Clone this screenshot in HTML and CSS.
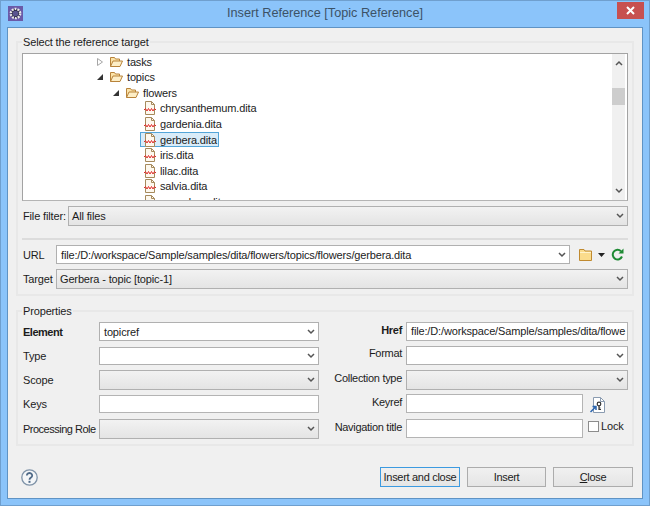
FILE: index.html
```html
<!DOCTYPE html>
<html lang="en">
<head>
	<meta charset="UTF-8">
	<title>Insert Reference [Topic Reference]</title>
	<link rel="stylesheet" href="styles.css">
</head>
<body>
	<svg class="defs" width="0" height="0">
		<symbol id="folder-open" viewBox="0 0 14 12">
			<path d="M1.500 10.500V1.500h4l1 1.500h4v2" fill="#fbe3a8" stroke="#b8833a"/>
			<path d="M1.500 10.500l2.500-5.500h9.500l-2.500 5.500z" fill="#fdeec6" stroke="#b8833a"/>
		</symbol>
		<symbol id="dita" viewBox="0 0 12 14">
			<path d="M1.500 .5h6l3 3v10h-9z" fill="#fdf8ee" stroke="#a68a5c"/>
			<path d="M7.500 .5v3h3" fill="none" stroke="#a68a5c"/>
			<path d="M0 9l1.500-1.500 1.500 2.500 1.500-2.500 1.500 2.500 1.500-2.500 1.500 2.500 1.500-2.500 1.500 1.500" fill="none" stroke="#e02b2b"/>
		</symbol>
		<symbol id="chevron" viewBox="0 0 8 6">
			<path d="M1 1l3 3 3-3" fill="none" stroke="#555" stroke-width="1.500"/>
		</symbol>
	</svg>

	<div class="window">
		<div class="titlebar">
			<svg class="app_icon" width="15" height="15" viewBox="0 0 16 16">
				<rect width="16" height="16" fill="#6a5aa8"/>
				<circle cx="8" cy="8" r="5" fill="#2c2a44" stroke="#e8e8e8" stroke-width="2.500" stroke-dasharray="2 1.140"/>
				<circle cx="8" cy="8" r="3" fill="#5a5590"/>
			</svg>
			<div class="title">Insert Reference [Topic Reference]</div>
			<div class="close_x">
				<svg width="9" height="9" viewBox="0 0 9 9"><path d="M1 1l7 7M8 1l-7 7" stroke="#fff" stroke-width="2"/></svg>
			</div>
		</div>

		<div class="content">
			<fieldset class="group">
				<legend>Select the reference target</legend>

				<div class="tree">
					<div class="tree_rows">
						<div class="row level2">
							<svg class="arrow" width="6" height="8" viewBox="0 0 6 8"><path d="M.5 .5l5 3.500-5 3.500z" fill="#fff" stroke="#a6a6a6"/></svg>
							<svg class="folder" width="14" height="12"><use href="#folder-open"/></svg>
							<span>tasks</span>
						</div>
						<div class="row level2">
							<svg class="arrow" width="6" height="6" viewBox="0 0 6 6"><path d="M6 0v6h-6z" fill="#333"/></svg>
							<svg class="folder" width="14" height="12"><use href="#folder-open"/></svg>
							<span>topics</span>
						</div>
						<div class="row level3">
							<svg class="arrow" width="6" height="6" viewBox="0 0 6 6"><path d="M6 0v6h-6z" fill="#333"/></svg>
							<svg class="folder" width="14" height="12"><use href="#folder-open"/></svg>
							<span>flowers</span>
						</div>
						<div class="row level4"><div class="file"><svg width="12" height="14"><use href="#dita"/></svg><span>chrysanthemum.dita</span></div></div>
						<div class="row level4"><div class="file"><svg width="12" height="14"><use href="#dita"/></svg><span>gardenia.dita</span></div></div>
						<div class="row level4"><div class="file selected"><svg width="12" height="14"><use href="#dita"/></svg><span>gerbera.dita</span></div></div>
						<div class="row level4"><div class="file"><svg width="12" height="14"><use href="#dita"/></svg><span>iris.dita</span></div></div>
						<div class="row level4"><div class="file"><svg width="12" height="14"><use href="#dita"/></svg><span>lilac.dita</span></div></div>
						<div class="row level4"><div class="file"><svg width="12" height="14"><use href="#dita"/></svg><span>salvia.dita</span></div></div>
						<div class="row level4"><div class="file"><svg width="12" height="14"><use href="#dita"/></svg><span>snowdrop.dita</span></div></div>
					</div>
					<div class="scrollbar">
						<svg class="scroll_btn" width="8" height="6" viewBox="0 0 8 6"><path d="M1 5l3-3 3 3" fill="none" stroke="#555" stroke-width="1.500"/></svg>
						<div class="scroll_track"><div class="scroll_thumb"></div></div>
						<svg class="scroll_btn" width="8" height="6"><use href="#chevron"/></svg>
					</div>
				</div>

				<div class="line filter_line">
					<label class="filter_label">File filter:</label>
					<div class="combo grey grow">All files<svg width="8" height="6"><use href="#chevron"/></svg></div>
				</div>

				<div class="separator"></div>

				<div class="line url_line">
					<label class="url_label">URL</label>
					<div class="combo white grow">file:/D:/workspace/Sample/samples/dita/flowers/topics/flowers/gerbera.dita<svg width="8" height="6"><use href="#chevron"/></svg></div>
					<div class="url_tools">
						<svg width="13" height="12" viewBox="0 0 13 12">
							<path d="M.5 11.500V.5h4.500l1 1.500h6.500v9.500z" fill="#fbdc8c" stroke="#c08a30"/>
							<path d="M1 3.500h11" stroke="#fff3cc"/>
						</svg>
						<svg class="drop" width="7" height="4" viewBox="0 0 7 4"><path d="M0 0h7l-3.500 4z" fill="#222"/></svg>
						<svg class="refresh" width="13" height="13" viewBox="0 0 13 13">
							<path d="M11 8.500a4.800 4.800 0 1 1-1-5.200" fill="none" stroke="#1e8a34" stroke-width="2"/>
							<path d="M12.500 .5v5h-5z" fill="#1e8a34"/>
						</svg>
					</div>
				</div>

				<div class="line target_line">
					<label class="url_label">Target</label>
					<div class="combo grey grow">Gerbera - topic [topic-1]<svg width="8" height="6"><use href="#chevron"/></svg></div>
				</div>
			</fieldset>

			<fieldset class="group props">
				<legend>Properties</legend>

				<div class="props_grid">
					<label class="tight"><b>Element</b></label>
					<div class="combo white">topicref<svg width="8" height="6"><use href="#chevron"/></svg></div>
					<label class="right"><b>Href</b></label>
					<div class="field">file:/D:/workspace/Sample/samples/dita/flowe</div>

					<label>Type</label>
					<div class="combo white low"><svg width="8" height="6"><use href="#chevron"/></svg></div>
					<label class="right up">Format</label>
					<div class="combo white"><svg width="8" height="6"><use href="#chevron"/></svg></div>

					<label>Scope</label>
					<div class="combo grey"><svg width="8" height="6"><use href="#chevron"/></svg></div>
					<label class="right">Collection type</label>
					<div class="combo grey"><svg width="8" height="6"><use href="#chevron"/></svg></div>

					<label>Keys</label>
					<div class="field low"></div>
					<label class="right">Keyref</label>
					<div class="cell">
						<div class="field grow"></div>
						<svg class="key_icon" width="15" height="16" viewBox="0 0 15 16">
							<path d="M3.500 .5h7l4 4v11h-11z" fill="#fff" stroke="#8a9bb0"/>
							<path d="M10.500 .5v4h4" fill="none" stroke="#8a9bb0"/>
							<circle cx="9" cy="7" r="1.800" fill="none" stroke="#333" stroke-width="1.200"/>
							<path d="M9 9v3.500h2M9 11h1.500" fill="none" stroke="#333" stroke-width="1.200"/>
							<path d="M.5 15l5-5M2.500 9.500h3.500v3.500" fill="none" stroke="#2b66b0" stroke-width="1.500"/>
						</svg>
					</div>

					<label class="tight">Processing Role</label>
					<div class="combo grey"><svg width="8" height="6"><use href="#chevron"/></svg></div>
					<label class="right">Navigation title</label>
					<div class="cell">
						<div class="field grow"></div>
						<div class="check"></div>
						<span>Lock</span>
					</div>
				</div>
			</fieldset>

			<div class="footer">
				<svg width="17" height="17" viewBox="0 0 17 17">
					<circle cx="8.500" cy="8.500" r="7.700" fill="#f4f6f8" stroke="#7f93a8" stroke-width="1.300"/>
					<path d="M5.800 6.500a2.700 2.500 0 1 1 4.200 2.100c-1 .7-1.500 1.100-1.500 2.100" fill="none" stroke="#4f6a88" stroke-width="1.800"/>
					<rect x="7.500" y="11.800" width="2" height="2" fill="#4f6a88"/>
				</svg>
				<div class="buttons">
					<button class="btn default">Insert and close</button>
					<button class="btn narrow">Insert</button>
					<button class="btn"><u>C</u>lose</button>
				</div>
			</div>
		</div>
	</div>
</body>
</html>
```

FILE: styles.css
```css
*{
	box-sizing:border-box;
	margin:0;
	padding:0;
}

body{
	font-family:"Liberation Sans",Arial,sans-serif;
	font-size:11px;
	letter-spacing:-0.15px;
	color:#1c1c1c;
	background-color:#8bc4fa;
}

label{
	white-space:nowrap;
}

.defs{
	position:absolute;
}

.window{
	width:650px;
	height:506px;
	padding:0 6px 6px 6px;
	background-color:#8bc4fa;
	border:1px solid #6f9fce;
	display:flex;
	flex-direction:column;
}

/* title bar */
.titlebar{
	height:26px;
	flex:none;
	display:grid;
	grid-template-columns:1fr auto 1fr;
	align-items:start;
}

.app_icon{
	margin:5px 0 0 1px;
}

.title{
	font-size:12.700px;
	letter-spacing:0;
	line-height:25px;
	color:#3c5266;
}

.close_x{
	justify-self:end;
	width:27px;
	height:17px;
	margin-right:-1px;
	margin-top:1px;
	background-color:#c75050;
	display:flex;
	align-items:center;
	justify-content:center;
}

/* main panel */
.content{
	flex:1;
	background-color:#f0f0f0;
	border:1px solid #5f93c4;
	padding:7px 8px 0 8px;
}

.group{
	height:261px;
	border:2px solid #e8e8e8;
	padding:4px 4px 5px 4px;
}

.group legend{
	line-height:14px;
	padding:0 1px;
}

.props{
	height:142px;
	margin-top:8px;
}

/* tree */
.tree{
	height:148px;
	background-color:#fff;
	border:1px solid #a3a3a3;
	border-bottom-color:#b4b4b4;
	display:flex;
	overflow:hidden;
}

.tree_rows{
	flex:1;
	overflow:hidden;
}

.row{
	height:15.550px;
	display:flex;
	align-items:center;
	white-space:nowrap;
}

.level2{ padding-left:74px; }
.level3{ padding-left:90px; }
.level4{ padding-left:117px; }

.arrow{
	width:6px;
	margin-right:6px;
}

.folder{
	margin-right:4px;
}

.file{
	height:15px;
	display:flex;
	align-items:center;
	gap:4px;
	padding:0 1px 0 3px;
	border:1px solid transparent;
}

.selected{
	background-color:#d9ecf9;
	border-color:#54a5d8;
}

.scrollbar{
	width:13px;
	margin-right:2px;
	background-color:#f0f0f0;
	display:flex;
	flex-direction:column;
	align-items:center;
}

.scroll_btn{
	flex:none;
	margin:6px 0;
}

.scroll_track{
	flex:1;
	width:100%;
	padding-top:16px;
}

.scroll_thumb{
	height:17px;
	background-color:#cdcdcd;
}

/* rows under the tree */
.line{
	display:flex;
	align-items:center;
}

.filter_line{
	margin-top:5px;
}

.filter_label{
	width:46px;
	padding-left:1px;
}

.url_label{
	width:34px;
	padding-left:1px;
}

.separator{
	height:2px;
	margin-top:12px;
	background-color:#dcdcdc;
}

.url_line{
	margin-top:5px;
}

.target_line{
	margin-top:5px;
}

.grow{
	flex:1;
	min-width:0;
}

.combo{
	height:19px;
	padding:0 3px 0 4px;
	border:1px solid #b0b0b0;
	display:flex;
	align-items:center;
	justify-content:space-between;
	white-space:nowrap;
}

.combo svg{
	margin-left:auto;
	flex:none;
}

.white{
	background-color:#fff;
}

.grey{
	height:20px;
	padding-left:3px;
	background:linear-gradient(#f2f2f2,#e4e4e4);
}

.url_tools{
	width:58px;
	display:flex;
	align-items:center;
	padding-left:9px;
}

.drop{
	margin-left:6px;
}

.refresh{
	margin-left:6px;
}

/* properties */
.props_grid{
	display:grid;
	grid-template-columns:77px 220px 87px 222px;
	grid-template-rows:24px 24px 24px 25px 20px;
	align-items:start;
}

.props_grid label{
	padding-left:1px;
	line-height:20px;
}

.props_grid .tight{
	letter-spacing:-0.500px;
}

.props_grid .right{
	text-align:right;
	padding-right:4px;
	letter-spacing:-0.300px;
	line-height:16px;
}

.props_grid .up{
	margin-top:-1px;
}

.field{
	height:19px;
	padding:0 4px;
	background-color:#fff;
	border:1px solid #b4b4b4;
	line-height:17px;
	white-space:nowrap;
	overflow:hidden;
}

.low{
	height:18px;
	margin-top:1px;
}

.cell{
	display:flex;
	align-items:flex-start;
}

.key_icon{
	margin:3px 23px 0 7px;
	flex:none;
}

.check{
	width:11px;
	height:11px;
	margin:2px 2px 0 5px;
	background-color:#fff;
	border:1px solid #8c8c8c;
	flex:none;
}

.cell span{
	width:27px;
	line-height:15px;
}

/* bottom buttons */
.footer{
	margin-top:21px;
	padding:0 1px 0 5px;
	display:flex;
	justify-content:space-between;
	align-items:center;
}

.buttons{
	display:flex;
	gap:7px;
}

.btn{
	width:80px;
	height:20px;
	font:inherit;
	letter-spacing:-0.300px;
	color:inherit;
	background:linear-gradient(#f0f0f0,#e5e5e5);
	border:1px solid #acacac;
}

.narrow{
	width:79px;
}

.default{
	border-color:#3c9ae0;
}
```
